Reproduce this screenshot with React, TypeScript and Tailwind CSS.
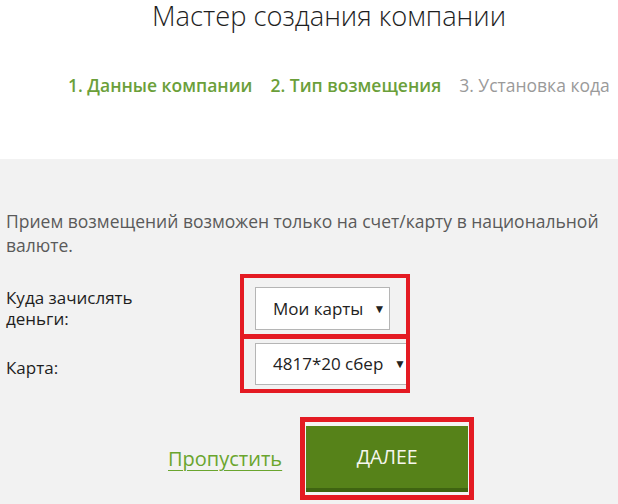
import React from 'react';

const steps = [
    { label: '1. Данные компании', done: true },
    { label: '2. Тип возмещения', done: true },
    { label: '3. Установка кода', done: false },
];

const Select: React.FC<{ value: string; className?: string }> = ({ value, className = '' }) => (
    <div className={`flex items-center bg-white border border-[#b5b5b5] text-[17px] text-[#222] pl-[17px] pr-[8px] gap-[10px] ${className}`}>
        <span className="flex-1 whitespace-nowrap">{value}</span>
        <span className="text-[12px] leading-none">▼</span>
    </div>
);

export default function App() {
    return (
        <div className="w-[618px] h-[504px] overflow-hidden bg-white font-['Open_Sans',sans-serif]">
            {/* Header */}
            <div className="h-[159px] bg-white">
                <h1 className="pl-[152px] text-[27.3px] leading-[32px] font-light text-[#1e1e1e] whitespace-nowrap">
                    Мастер создания компании
                </h1>
                <div className="flex gap-[18px] pl-[68px] mt-[41px] text-[17.5px] leading-[24px] whitespace-nowrap">
                    {steps.map((s) => (
                        <span key={s.label} className={s.done ? 'font-semibold text-[#6b9f3a]' : 'text-[#9a9a9a]'}>
                            {s.label}
                        </span>
                    ))}
                </div>
            </div>

            {/* Form */}
            <div className="bg-[#f2f2f2] h-[345px] pl-[6px] pt-[50px]">
                <p className="text-[17.5px] leading-[24px] text-[#5a5a5a] pr-[10px]">
                    Прием возмещений возможен только на счет/карту в национальной валюте.
                </p>

                <div className="mt-[17px] flex">
                    <div className="w-[234px] text-[17px] leading-[21px] text-[#1e1e1e]">
                        <div className="pt-[13px] h-[63px]">Куда зачислять<br />деньги:</div>
                        <div className="pt-[20px]">Карта:</div>
                    </div>
                    <div className="flex flex-col">
                        <div className="w-[170px] border-4 border-b-[5px] border-[#e41b23] pl-[11px] pt-[9px] pb-[4px]">
                            <Select value="Мои карты" className="w-[135px] h-[43px]" />
                        </div>
                        <div className="w-[170px] border-4 border-t-0 border-[#e41b23] pl-[11px] pt-[4px] pb-[4px] overflow-hidden">
                            <Select value="4817*20 сбер" className="w-[160px] h-[42px]" />
                        </div>
                    </div>
                </div>

                <div className="mt-[24px] flex items-center">
                    <a className="ml-[162px] text-[20px] text-[#6aa52e] underline decoration-[1px] underline-offset-[4px]">
                        Пропустить
                    </a>
                    <div className="ml-[18px] border-[5px] border-[#e41b23] p-[1px] pt-[4px] pb-[3px] bg-[#f4f4f4]">
                        <button className="w-[162px] h-[66px] bg-[#568219] border-b-4 border-[#3f6411] text-[#f7f7ee] text-[19.5px] font-medium">
                            ДАЛЕЕ
                        </button>
                    </div>
                </div>
            </div>
        </div>
    );
}
